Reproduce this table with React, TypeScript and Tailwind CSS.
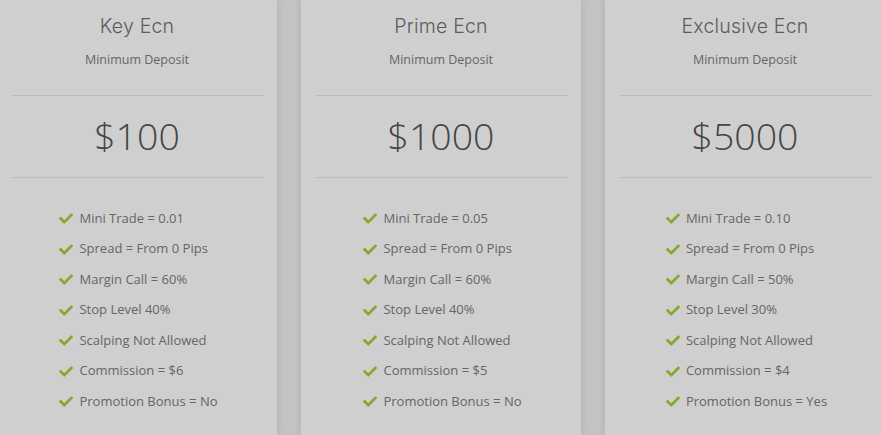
import React from "react";

type Plan = { title: string; price: string; features: string[] };

const plans: Plan[] = [
  {
    title: "Key Ecn",
    price: "$100",
    features: [
      "Mini Trade = 0.01",
      "Spread = From 0 Pips",
      "Margin Call = 60%",
      "Stop Level 40%",
      "Scalping Not Allowed",
      "Commission = $6",
      "Promotion Bonus = No",
    ],
  },
  {
    title: "Prime Ecn",
    price: "$1000",
    features: [
      "Mini Trade = 0.05",
      "Spread = From 0 Pips",
      "Margin Call = 60%",
      "Stop Level 40%",
      "Scalping Not Allowed",
      "Commission = $5",
      "Promotion Bonus = No",
    ],
  },
  {
    title: "Exclusive Ecn",
    price: "$5000",
    features: [
      "Mini Trade = 0.10",
      "Spread = From 0 Pips",
      "Margin Call = 50%",
      "Stop Level 30%",
      "Scalping Not Allowed",
      "Commission = $4",
      "Promotion Bonus = Yes",
    ],
  },
];

function Check() {
  return (
    <svg width="14" height="12" viewBox="0 0 512 430" className="shrink-0">
      <path
        fill="#86a92c"
        d="M173.9 420.4L7.5 254c-10-10-10-26.2 0-36.2l36.2-36.2c10-10 26.2-10 36.2 0L192 293.7 432.1 53.6c10-10 26.2-10 36.2 0l36.2 36.2c10 10 10 26.2 0 36.2L210.1 420.4c-10 10-26.2 10-36.2 0z"
      />
    </svg>
  );
}

function Card({ plan }: { plan: Plan }) {
  return (
    <div className="w-[280px] shrink-0 bg-[#cfcfcf] shadow-[0_0_8px_rgba(0,0,0,0.12)] flex flex-col items-center pt-[14px] h-[435px]">
      <div
        className="text-[19.5px] leading-[24px] text-[#5c5c5c] font-light tracking-[0.2px]"
        style={{ fontFamily: "Inter, 'Noto Sans', sans-serif" }}
      >
        {plan.title}
      </div>
      <div
        className="mt-[13px] text-[12.5px] leading-[18px] text-[#666]"
        style={{ fontFamily: "'Open Sans', sans-serif" }}
      >
        Minimum Deposit
      </div>
      <div className="mt-[26px] ml-[2px] w-[252px] h-px bg-[#bdbdbd]" />
      <div
        className="mt-[18px] text-[37.5px] leading-[44px] text-[#454545] font-light"
        style={{ fontFamily: "'Open Sans', sans-serif" }}
      >
        {plan.price}
      </div>
      <div className="mt-[19px] ml-[2px] w-[252px] h-px bg-[#bdbdbd]" />
      <ul
        className="pt-[25px] ml-[3px] flex flex-col"
        style={{ fontFamily: "'Open Sans', sans-serif" }}
      >
        {plan.features.map((f) => (
          <li key={f} className="h-[30.5px] flex items-center gap-[6px] text-[13px] text-[#666]">
            <Check />
            <span>{f}</span>
          </li>
        ))}
      </ul>
    </div>
  );
}

export default function App() {
  return (
    <div className="w-[881px] h-[435px] overflow-hidden bg-[#c4c4c4]">
      <div className="flex gap-[24px] ml-[-3px]">
        {plans.map((p) => (
          <Card key={p.title} plan={p} />
        ))}
      </div>
    </div>
  );
}
